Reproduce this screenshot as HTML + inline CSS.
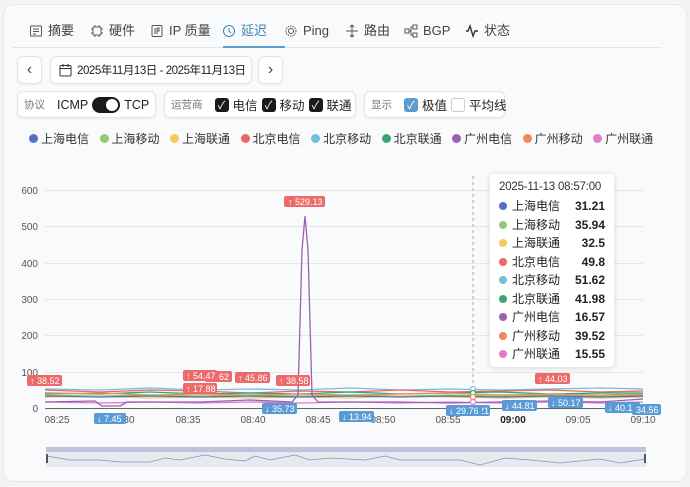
<!DOCTYPE html>
<html><head><meta charset="utf-8"><style>
*{box-sizing:border-box;margin:0;padding:0}
body{width:690px;height:487px;background:#f3f4f6;font-family:"Liberation Sans","Noto Sans CJK SC",sans-serif;color:#222;position:relative;overflow:hidden;white-space:nowrap}
.card{position:absolute;left:3px;top:4px;width:684px;height:478px;background:#f9fafb;border:1px solid #e4e6ea;border-radius:10px}
.tabs{position:absolute;left:12px;top:18px;width:650px;height:30px;border-bottom:1px solid #e3e5e8;font-size:13px;color:#444}
.tab{position:absolute;top:5px;display:flex;align-items:center;gap:5px;line-height:16px}
.tab svg{width:14px;height:14px}
.act{color:#3f86b8}
.uline{position:absolute;left:211px;top:28px;width:62px;height:2px;background:#5d9cc8}
.btn{position:absolute;background:#fff;border:1px solid #e2e4e8;border-radius:6px;box-shadow:0 1px 2px rgba(0,0,0,.06);display:flex;align-items:center;font-size:12px}
.grp{position:absolute;top:91px;height:27px;background:#fff;border:1px solid #e2e4e8;border-radius:6px;box-shadow:0 1px 2px rgba(0,0,0,.06);display:flex;align-items:center;font-size:12.5px;padding:0 6px;gap:4px}
.lab{color:#777;font-size:10.5px}
.sep{width:1px;height:11px;background:#ccc;margin:0 2px}
.cb{width:14px;height:14px;border-radius:3px;background:#1a1a1a;display:inline-flex;align-items:center;justify-content:center;color:#fff;font-size:11px;flex:none}
.cbb{background:#5a9bd0}
.cbe{background:#fff;border:1px solid #ccc}
.leg{position:absolute;top:130px;left:29px;display:flex;font-size:12px;color:#333}
.leg span{display:flex;align-items:center;margin-right:10.5px}
.leg i{width:9px;height:9px;border-radius:50%;display:inline-block;margin-right:3px}
.tip{position:absolute;left:490px;top:174px;width:124px;height:193px;background:#fff;border-radius:4px;box-shadow:0 1px 6px rgba(0,0,0,.15);font-size:12px;padding:5px 9px}
.tip .h{font-size:11.5px;color:#333;margin-bottom:2px;line-height:16px;letter-spacing:-0.2px}
.tip .r{display:flex;align-items:center;height:18.5px;line-height:14px}
.tip .r i{width:8px;height:8px;border-radius:50%;margin-right:5px}
.tip .r b{margin-left:auto;font-weight:bold;color:#222}
</style></head><body>
<div class="card"></div>
<div class="tabs">
 <div class="tab" style="left:17px"><svg viewBox="0 0 14 14" fill="none" stroke="#555"><rect x="1.5" y="2" width="11" height="10" rx="1"/><path d="M4 5h6M4 7.5h6M4 10h3"/></svg>摘要</div>
 <div class="tab" style="left:78px"><svg viewBox="0 0 14 14" fill="none" stroke="#555"><rect x="3" y="3" width="8" height="8" rx="1"/><path d="M5 1v2M9 1v2M5 11v2M9 11v2M1 5h2M1 9h2M11 5h2M11 9h2"/></svg>硬件</div>
 <div class="tab" style="left:138px"><svg viewBox="0 0 14 14" fill="none" stroke="#555"><rect x="2" y="1.5" width="10" height="11" rx="1"/><path d="M5 4v6M7 10V4h2v3H7"/></svg>IP 质量</div>
 <div class="tab act" style="left:210px"><svg viewBox="0 0 14 14" fill="none" stroke="#3f86b8"><circle cx="7" cy="7" r="5.5"/><path d="M7 4v3l2 2"/></svg>延迟</div>
 <div class="tab" style="left:272px"><svg viewBox="0 0 14 14" fill="none" stroke="#555"><circle cx="7" cy="7" r="5" stroke-dasharray="1.5 1"/><circle cx="7" cy="7" r="2.5"/></svg>Ping</div>
 <div class="tab" style="left:333px"><svg viewBox="0 0 14 14" fill="none" stroke="#555"><path d="M7 1v12M1 7h12M5 3l2-2 2 2M5 11l2 2 2-2"/></svg>路由</div>
 <div class="tab" style="left:392px"><svg viewBox="0 0 14 14" fill="none" stroke="#555"><rect x="1" y="5" width="4" height="4"/><rect x="9" y="1" width="4" height="4"/><rect x="9" y="9" width="4" height="4"/><path d="M5 7h2v-4h2M7 7v4h2"/></svg>BGP</div>
 <div class="tab" style="left:453px"><svg viewBox="0 0 14 14" fill="none" stroke="#333" stroke-width="1.4"><path d="M1 7h2l2-5 3 10 2-5h3"/></svg>状态</div>
 <div class="uline"></div>
</div>
<div class="btn" style="left:17px;top:56px;width:25px;height:28px;justify-content:center;font-size:16px;color:#444">‹</div>
<div class="btn" style="left:50px;top:56px;width:202px;height:28px;padding-left:8px;gap:5px"><svg width="13" height="14" viewBox="0 0 13 14" fill="none" stroke="#333" style="flex:none"><rect x="1" y="2.5" width="11" height="10.5" rx="1"/><path d="M1 5.5h11M4 1v3M9 1v3"/></svg><span style="font-size:11.5px;letter-spacing:-0.45px">2025年11月13日 - 2025年11月13日</span></div>
<div class="btn" style="left:258px;top:56px;width:25px;height:28px;justify-content:center;font-size:16px;color:#444">›</div>
<div class="grp" style="left:17px;width:139px"><span class="lab">协议</span><span class="sep"></span>ICMP<span style="width:28px;height:16px;border-radius:8px;background:#1a1a1a;position:relative;display:inline-block;flex:none"><span style="position:absolute;right:2px;top:2px;width:12px;height:12px;border-radius:50%;background:#fff"></span></span>TCP</div>
<div class="grp" style="left:164px;width:192px"><span class="lab">运营商</span><span class="sep"></span><span class="cb">✓</span>电信 <span class="cb">✓</span>移动 <span class="cb">✓</span>联通</div>
<div class="grp" style="left:364px;width:141px"><span class="lab">显示</span><span class="sep"></span><span class="cb cbb">✓</span>极值 <span class="cb cbe"></span>平均线</div>
<div class="leg">
<span><i style="background:#5470c6"></i>上海电信</span><span><i style="background:#91cc75"></i>上海移动</span><span><i style="background:#fac858"></i>上海联通</span><span><i style="background:#ee6666"></i>北京电信</span><span><i style="background:#73c0de"></i>北京移动</span><span><i style="background:#3ba272"></i>北京联通</span><span><i style="background:#9a60b4"></i>广州电信</span><span><i style="background:#f08a55"></i>广州移动</span><span><i style="background:#e07cc8"></i>广州联通</span>
</div>
<svg style="position:absolute;left:0;top:0" width="690" height="487" font-family="Liberation Sans,sans-serif" font-size="10">
<g stroke="#e4e6ea"><path d="M45 190.5H643M45 226.5H643M45 263.5H643M45 299.5H643M45 335.5H643M45 372.5H643"/></g>
<g fill="#555" text-anchor="end"><text x="38" y="194">600</text><text x="38" y="230">500</text><text x="38" y="267">400</text><text x="38" y="303">300</text><text x="38" y="339">200</text><text x="38" y="376">100</text><text x="38" y="412">0</text></g>
<path d="M45 408.5H643" stroke="#666"/>
<g fill="#555" text-anchor="middle"><text x="57" y="423">08:25</text><text x="122" y="423">08:30</text><text x="188" y="423">08:35</text><text x="253" y="423">08:40</text><text x="318" y="423">08:45</text><text x="383" y="423">08:50</text><text x="448" y="423">08:55</text><text x="513" y="423" font-weight="bold" fill="#222">09:00</text><text x="578" y="423">09:05</text><text x="643" y="423">09:10</text></g>
<path d="M473 176V408" stroke="#aaa" stroke-dasharray="3 3"/>
<g fill="none" stroke-width="1.3">
<path d="M45 389L100 390 150 388 200 390 250 389 300 390 350 388 400 390 450 389 500 390 550 389 600 388 643 389" stroke="#73c0de"/>
<path d="M45 390L100 392 150 390 200 391 250 393 300 391 350 392 400 390 450 392 500 391 550 390 600 392 643 391" stroke="#ee6666"/>
<path d="M45 393L100 394 150 392 200 394 250 393 300 394 350 392 400 394 450 393 500 392 550 394 600 393 643 393" stroke="#3ba272"/>
<path d="M45 394L100 393 150 395 200 394 250 395 300 394 350 395 400 394 450 393 500 395 550 394 600 395 643 394" stroke="#f08a55"/>
<path d="M45 395L100 396 150 395 200 396 250 395 300 396 350 395 400 396 450 395 500 396 550 395 600 396 643 395" stroke="#91cc75"/>
<path d="M45 397L100 396 150 398 200 397 250 398 300 397 350 398 400 396 450 397 500 398 550 397 600 398 643 397" stroke="#fac858"/>
<path d="M45 396L100 397 150 396 200 397 250 396 300 397 350 396 400 397 450 396 500 397 550 396 600 397 643 396" stroke="#5470c6"/>
<path d="M45 402L100 403 150 402 200 403 250 402 300 403 350 402 400 403 450 402 500 403 550 402 600 403 643 402" stroke="#e07cc8"/>
<path d="M45 402L95 401 102 406 120 406 127 402 200 402 250 400 292 402 298 395 302 250 305 216 308 250 312 395 318 402 400 402 450 403 500 402 550 401 600 402 643 399" stroke="#9a60b4"/>
</g>
<g fill="#fff" stroke-width="1.2"><circle cx="473" cy="389" r="2.5" stroke="#73c0de"/><circle cx="473" cy="393" r="2.5" stroke="#3ba272"/><circle cx="473" cy="397" r="2.5" stroke="#f08a55"/><circle cx="473" cy="402" r="2.5" stroke="#e07cc8"/></g>
<g font-size="9" fill="#fff">
<rect x="27" y="375" width="35" height="11" rx="2" fill="#ec6a6a"/><text x="30" y="384">↑ 38.52</text>
<rect x="205" y="371" width="27" height="11" rx="2" fill="#ec6a6a"/><text x="219" y="380">62</text>
<rect x="183" y="370" width="34" height="11" rx="2" fill="#ec6a6a"/><text x="186" y="379">↑ 54.47</text>
<rect x="183" y="383" width="34" height="11" rx="2" fill="#ec6a6a"/><text x="186" y="392">↑ 17.88</text>
<rect x="235" y="372" width="35" height="11" rx="2" fill="#ec6a6a"/><text x="238" y="381">↑ 45.86</text>
<rect x="276" y="375" width="34" height="11" rx="2" fill="#ec6a6a"/><text x="279" y="384">↑ 38.58</text>
<rect x="535" y="373" width="35" height="11" rx="2" fill="#ec6a6a"/><text x="538" y="382">↑ 44.03</text>
<rect x="284" y="196" width="41" height="11" rx="2" fill="#ec6a6a"/><text x="288" y="205">↑ 529.13</text>
<rect x="94" y="413" width="32" height="11" rx="2" fill="#5b9bd5"/><text x="97" y="422">↓ 7.45</text>
<rect x="262" y="403" width="35" height="11" rx="2" fill="#5b9bd5"/><text x="265" y="412">↓ 35.73</text>
<rect x="339" y="411" width="35" height="11" rx="2" fill="#5b9bd5"/><text x="342" y="420">↓ 13.94</text>
<rect x="470" y="405" width="20" height="11" rx="2" fill="#5b9bd5"/><text x="479" y="414">21</text>
<rect x="446" y="405" width="36" height="11" rx="2" fill="#5b9bd5"/><text x="449" y="414">↓ 29.76</text>
<rect x="502" y="400" width="35" height="11" rx="2" fill="#5b9bd5"/><text x="505" y="409">↓ 44.81</text>
<rect x="548" y="397" width="35" height="11" rx="2" fill="#5b9bd5"/><text x="551" y="406">↓ 50.17</text>
<rect x="605" y="402" width="35" height="11" rx="2" fill="#5b9bd5"/><text x="608" y="411">↓ 40.14</text>
<rect x="632" y="404" width="29" height="11" rx="2" fill="#5b9bd5"/><text x="636" y="413">34.56</text>
</g>
<rect x="46" y="447" width="600" height="20" fill="#e6e9ef"/>
<rect x="46" y="447" width="600" height="5" fill="#bcc3da"/>
<path d="M47 456L70 460 100 460 120 462 150 462 165 458 180 460 205 455 225 459 245 461 255 456 270 460 295 455 310 460 330 458 365 460 385 456 400 460 460 460 480 465 505 458 530 460 560 463 580 461 600 459 620 463 645 459" fill="none" stroke="#8a93a6" stroke-width="0.8"/>
<rect x="46" y="454" width="2" height="9" fill="#556"/><rect x="644" y="454" width="2" height="9" fill="#556"/>
</svg>
<div class="tip">
<div class="h">2025-11-13 08:57:00</div>
<div class="r"><i style="background:#5470c6"></i>上海电信<b>31.21</b></div>
<div class="r"><i style="background:#91cc75"></i>上海移动<b>35.94</b></div>
<div class="r"><i style="background:#fac858"></i>上海联通<b>32.5</b></div>
<div class="r"><i style="background:#ee6666"></i>北京电信<b>49.8</b></div>
<div class="r"><i style="background:#73c0de"></i>北京移动<b>51.62</b></div>
<div class="r"><i style="background:#3ba272"></i>北京联通<b>41.98</b></div>
<div class="r"><i style="background:#9a60b4"></i>广州电信<b>16.57</b></div>
<div class="r"><i style="background:#f08a55"></i>广州移动<b>39.52</b></div>
<div class="r"><i style="background:#e07cc8"></i>广州联通<b>15.55</b></div>
</div>
</body></html>
